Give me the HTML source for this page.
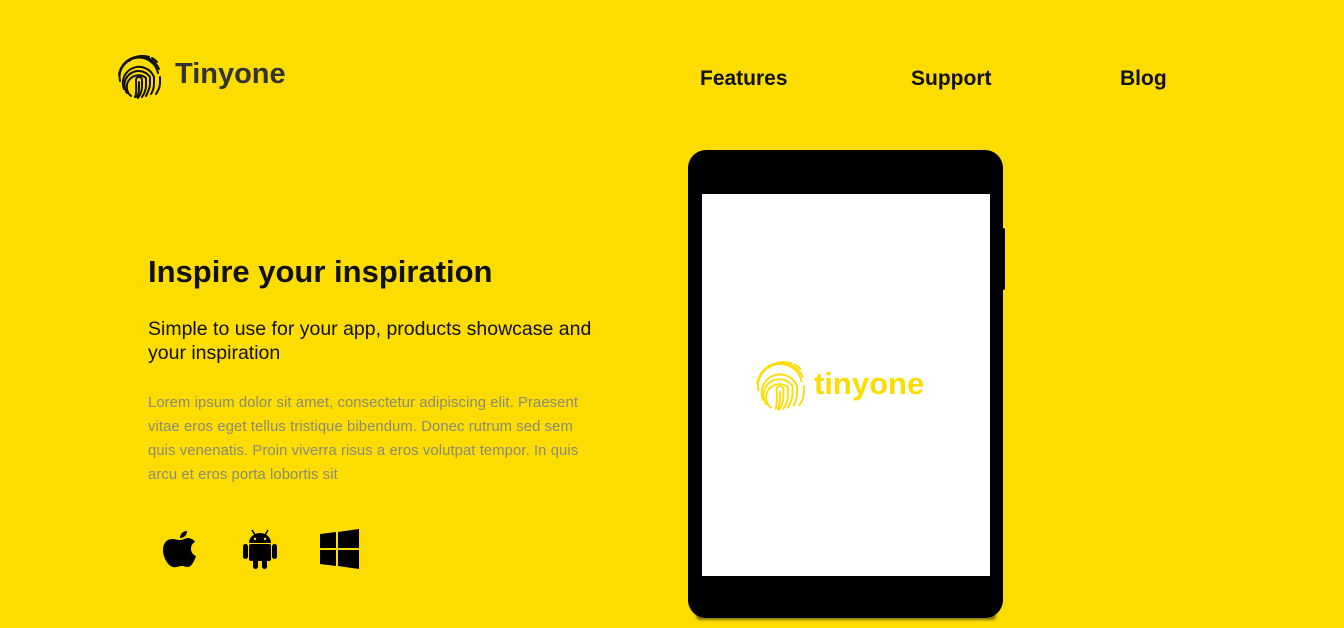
<!DOCTYPE html>
<html><head><meta charset="utf-8"><style>
*{margin:0;padding:0;box-sizing:border-box}
body{width:1344px;height:628px;overflow:hidden;background:#fddc00;font-family:"Liberation Sans","DejaVu Sans",sans-serif;position:relative}
.a{position:absolute}
.nav{font-weight:bold;font-size:21px;color:#111;top:67px}
</style></head><body>
<svg width="0" height="0" style="position:absolute"><defs>
<g id="fp" fill="none" stroke-linecap="round">
<path d="M12 6 A20 20 0 0 1 32 2"/><path d="M35 3 A20 20 0 0 1 40 7"/>
<path d="M5 12 A20 20 0 0 1 9 8"/>
<path d="M3 26 A19 19 0 0 1 41 18"/>
<path d="M7 34 A15 15 0 0 1 37 22 V28 C37 32 36 36 34 39"/>
<path d="M10 38 A12 12 0 0 1 33 22 V29 C33 33 31 37 29 41"/>
<path d="M14 41 A8 8 0 0 1 29 23 V31 C29 35 27 39 25 42"/>
<path d="M18 42 C20 38 19 30 19 25 A3 3 0 0 1 25 25 V32 C25 36 23 40 21 43"/>
<path d="M22 27 V33 C22 37 21 40 20 42"/>
<path d="M2 20 A21 21 0 0 1 42 14 M43 22 V28 C43 32 41 36 39 39"/>
</g></defs></svg>
<svg class="a" style="left:117px;top:55px" width="44" height="44" viewBox="0 0 44 44" stroke="#111" stroke-width="2"><use href="#fp"/></svg>
<div class="a" style="left:175px;top:58px;font-size:29px;font-weight:bold;color:#333">Tinyone</div>
<div class="a nav" style="left:700px">Features</div>
<div class="a nav" style="left:911px">Support</div>
<div class="a nav" style="left:1120px">Blog</div>
<div class="a" style="left:148px;top:254px;font-size:31px;font-weight:bold;color:#111">Inspire your inspiration</div>
<div class="a" style="left:148px;top:317px;width:470px;font-size:19.5px;line-height:24px;color:#111">Simple to use for your app, products showcase and your inspiration</div>
<div class="a" style="left:148px;top:391px;width:452px;font-size:14.8px;line-height:24px;color:#8a8a7a;letter-spacing:0.1px">Lorem ipsum dolor sit amet, consectetur adipiscing elit. Praesent vitae eros eget tellus tristique bibendum. Donec rutrum sed sem quis venenatis. Proin viverra risus a eros volutpat tempor. In quis arcu et eros porta lobortis sit</div>
<svg class="a" style="left:162px;top:529px" width="36" height="40" viewBox="0 0 36 40"><path fill="#000" d="M25 2c0 4-3 7-7 7 0-4 3-7 7-7zM18 11c3 0 5-2 8-2 3 0 6 2 7 4-6 3-5 12 1 14-2 6-5 11-8 11-3 0-3-1-6-1s-4 1-6 1C8 40 1 30 1 21c0-7 4-11 9-11 3 0 5 1 8 1z"/></svg>
<svg class="a" style="left:242px;top:528px" width="36" height="42" viewBox="0 0 36 42" fill="#000"><path d="M10 2l3 5M26 2l-3 5" stroke="#000" stroke-width="1.5"/><path d="M7 15a11 10 0 0 1 22 0z"/><circle cx="13" cy="11" r="1.2" fill="#fddc00"/><circle cx="23" cy="11" r="1.2" fill="#fddc00"/><rect x="7" y="16" width="22" height="17" rx="2"/><rect x="1" y="16" width="5" height="15" rx="2.5"/><rect x="30" y="16" width="5" height="15" rx="2.5"/><rect x="11" y="30" width="5" height="11" rx="2.5"/><rect x="20" y="30" width="5" height="11" rx="2.5"/></svg>
<svg class="a" style="left:320px;top:529px" width="40" height="40" viewBox="0 0 40 40" fill="#000"><path d="M0 5l16-2v16H0zM18 3l21-3v19H18zM0 21h16v16L0 35zM18 21h21v19l-21-3z"/></svg>
<div class="a" style="left:696px;top:612px;width:300px;height:8px;background:#8a7a00;border-radius:4px;filter:blur(1px)"></div>
<div class="a" style="left:1000px;top:228px;width:5px;height:62px;background:#000;border-radius:2px"></div>
<div class="a" style="left:688px;top:150px;width:315px;height:468px;background:#000;border-radius:18px"></div>
<div class="a" style="left:702px;top:194px;width:288px;height:382px;background:#fff"></div>
<svg class="a" style="left:755px;top:360px" width="50" height="52" viewBox="0 0 44 44" stroke="#fddc00" stroke-width="1.6"><use href="#fp"/></svg>
<div class="a" style="left:814px;top:366px;font-size:31px;font-weight:bold;color:#fddc00">tinyone</div>
</body></html>
